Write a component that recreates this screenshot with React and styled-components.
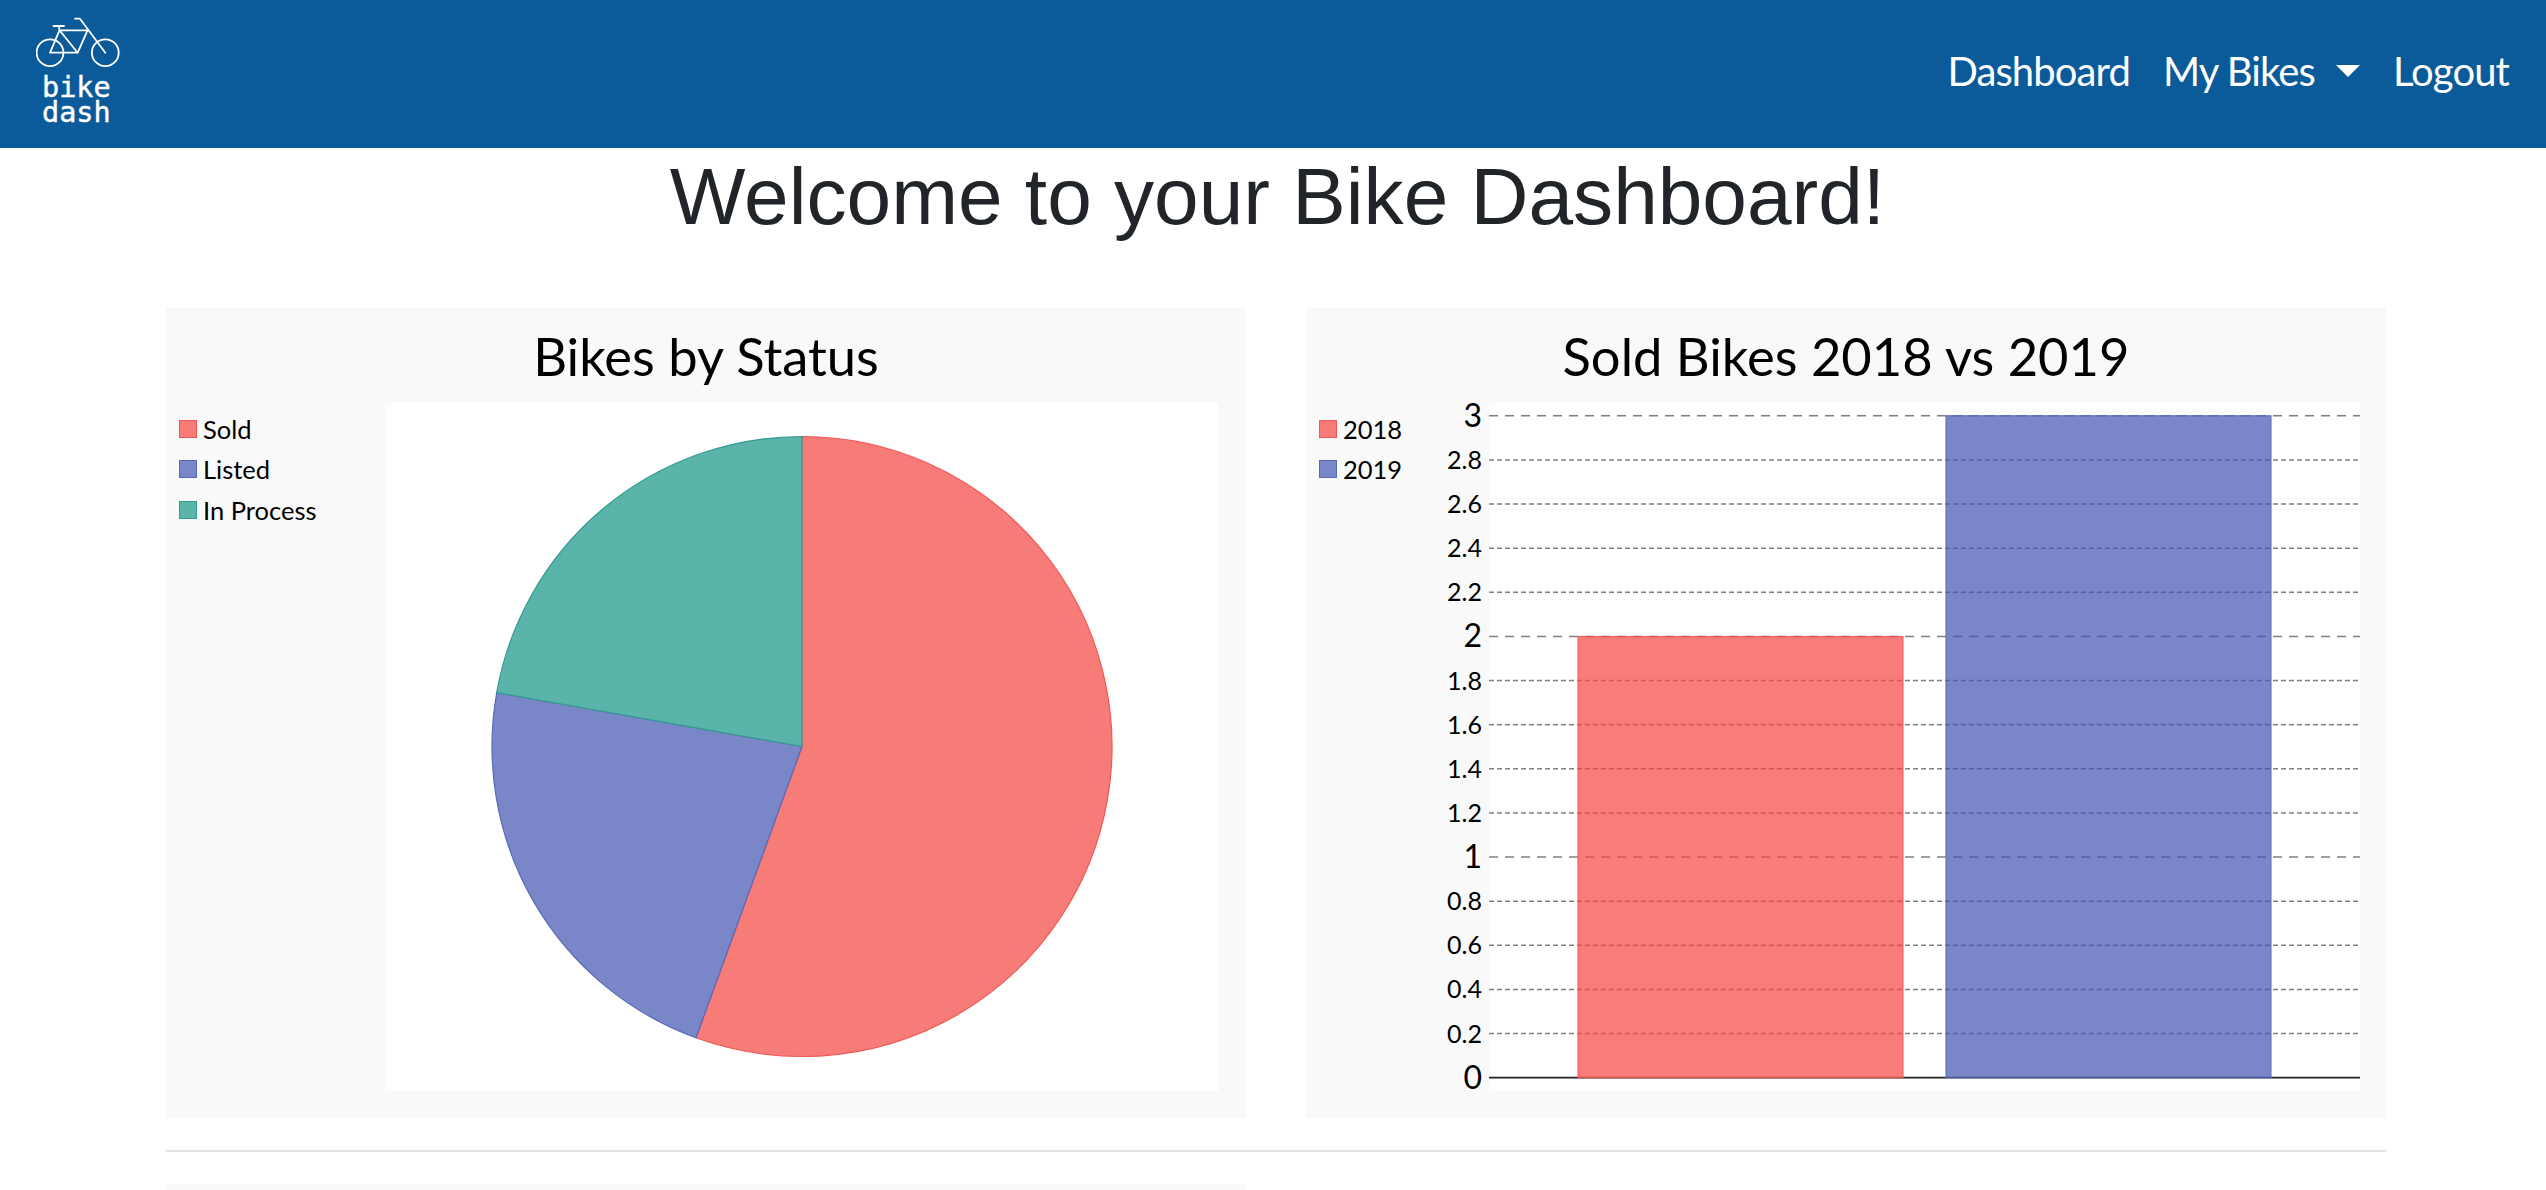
import styled, { createGlobalStyle } from "styled-components"

const GlobalStyle = createGlobalStyle`
  html, body {
    margin: 0;
    padding: 0;
    height: 1190px;
    overflow: hidden;
    background: #fff;
  }
`

const RED = { fill: "rgb(247,123,118)", barFill: "rgba(245,70,66,0.7)", stroke: "rgb(238,88,84)" }
const BLUE = { fill: "rgb(121,134,199)", barFill: "rgba(64,82,175,0.7)", stroke: "rgb(88,104,184)" }
const GREEN = { fill: "rgb(91,180,170)", stroke: "rgb(50,155,143)" }

const statusSlices = [
  { label: "Sold", value: 5, ...RED },
  { label: "Listed", value: 2, ...BLUE },
  { label: "In Process", value: 2, ...GREEN },
]
const yearBars = [
  { label: "2018", value: 2, x: 89, ...RED },
  { label: "2019", value: 3, x: 457, ...BLUE },
]

const ZERO_Y = 674.7
const STEP_Y = 44.13

function Logo() {
  return (
    <LogoBlock>
      <svg width="85" height="50" viewBox="36 17 85 50" fill="none" stroke="#fff" strokeWidth="1.8" strokeLinecap="round" strokeLinejoin="round">
        <circle cx="50" cy="52.7" r="13.4" />
        <circle cx="105.3" cy="52.7" r="13.4" />
        <path d="M53.5 26h10.5M59 26l.5 4.3M59.5 30.3h28M59.5 30.3L50 52.7h27.7L87.5 30.3M59.5 30.3l18.2 22.4M75 18.7h5l25.3 34" />
      </svg>
      <LogoText>bike<br />dash</LogoText>
    </LogoBlock>
  )
}

function Legend({ items, width }) {
  return (
    <LegendList $width={width}>
      {items.map((item) => (
        <LegendRow key={item.label}>
          <Swatch $fill={item.fill} $stroke={item.stroke} />
          {item.label}
        </LegendRow>
      ))}
    </LegendList>
  )
}

function PieChart() {
  const cx = 417
  const cy = 343.5
  const r = 310
  const total = statusSlices.reduce((sum, s) => sum + s.value, 0)
  let angle = 0
  return (
    <ChartSvg>
      {statusSlices.map((s) => {
        const start = angle
        angle += (s.value / total) * Math.PI * 2
        const x0 = cx + r * Math.sin(start)
        const y0 = cy - r * Math.cos(start)
        const x1 = cx + r * Math.sin(angle)
        const y1 = cy - r * Math.cos(angle)
        const large = angle - start > Math.PI ? 1 : 0
        return (
          <path
            key={s.label}
            d={`M${cx} ${cy}L${x0} ${y0}A${r} ${r} 0 ${large} 1 ${x1} ${y1}Z`}
            fill={s.fill}
            stroke={s.stroke}
            strokeWidth="1.2"
          />
        )
      })}
    </ChartSvg>
  )
}

function BarChart() {
  const ticks = Array.from({ length: 16 }, (_, i) => i)
  return (
    <ChartSvg>
      {ticks.slice(1).map((i) => {
        const major = i % 5 === 0
        return (
          <line
            key={i}
            x1="0"
            x2="871"
            y1={ZERO_Y - i * STEP_Y}
            y2={ZERO_Y - i * STEP_Y}
            stroke="#808080"
            strokeWidth="1.5"
            strokeDasharray={major ? "9 7" : "5 3"}
          />
        )
      })}
      <line x1="0" x2="871" y1={ZERO_Y} y2={ZERO_Y} stroke="#222" strokeWidth="1.8" />
      {yearBars.map((b) => (
        <rect
          key={b.label}
          x={b.x}
          y={ZERO_Y - b.value * 5 * STEP_Y}
          width="325"
          height={b.value * 5 * STEP_Y}
          fill={b.barFill}
          stroke={b.stroke}
          strokeWidth="1"
        />
      ))}
      {ticks.map((i) => (
        <AxisLabel key={i} x="-7" y={ZERO_Y - i * STEP_Y} dy={i % 5 === 0 ? 11 : 9} $major={i % 5 === 0}>
          {Number((i * 0.2).toFixed(1))}
        </AxisLabel>
      ))}
    </ChartSvg>
  )
}

export default function App() {
  return (
    <>
      <GlobalStyle />
      <Header>
        <Logo />
        <Nav>
          <NavLink>Dashboard</NavLink>
          <NavDropdown>
            <NavLink>My Bikes</NavLink>
            <Caret />
          </NavDropdown>
          <NavLink>Logout</NavLink>
        </Nav>
      </Header>
      <Main>
        <PageTitle>Welcome to your Bike Dashboard!</PageTitle>
        <CardRow>
          <Card>
            <CardTitle>Bikes by Status</CardTitle>
            <ChartRow $gutter={28}>
              <Legend items={statusSlices} width={219} />
              <Plot>
                <PieChart />
              </Plot>
            </ChartRow>
          </Card>
          <Card>
            <CardTitle>Sold Bikes 2018 vs 2019</CardTitle>
            <ChartRow $gutter={26}>
              <Legend items={yearBars} width={183} />
              <Plot>
                <BarChart />
              </Plot>
            </ChartRow>
          </Card>
        </CardRow>
        <Divider />
        <CardRow>
          <Card />
        </CardRow>
      </Main>
    </>
  )
}

const Header = styled.header`
  height: 148px;
  box-sizing: border-box;
  background: #0b5a9a;
  display: flex;
  align-items: flex-start;
  justify-content: space-between;
  padding: 17px 37px 0 36px;
`
const LogoBlock = styled.div`
  display: flex;
  flex-direction: column;
  svg {
    display: block;
  }
`
const LogoText = styled.div`
  margin: 8px 0 0 6px;
  font-family: "DejaVu Sans Mono", monospace;
  font-size: 28.5px;
  line-height: 25px;
  color: #fff;
  -webkit-text-stroke: 0.4px #fff;
`
const Nav = styled.nav`
  display: flex;
  align-items: center;
  gap: 33px;
  height: 108px;
`
const NavLink = styled.a`
  font-family: Lato, sans-serif;
  font-size: 40px;
  letter-spacing: -0.9px;
  color: #fff;
`
const NavDropdown = styled.div`
  display: flex;
  align-items: center;
  gap: 21px;
`
const Caret = styled.span`
  width: 0;
  height: 0;
  border-left: 12px solid transparent;
  border-right: 12px solid transparent;
  border-top: 12px solid #fff;
`
const Main = styled.main`
  padding: 0 160px 0 166px;
`
const PageTitle = styled.h1`
  margin: 0 0 64px;
  padding-left: 3px;
  font-family: "Liberation Sans", Arial, sans-serif;
  font-size: 80.2px;
  font-weight: 400;
  line-height: 96px;
  color: #212529;
  text-align: center;
`
const CardRow = styled.div`
  display: grid;
  grid-template-columns: 1fr 1fr;
  gap: 60px;
`
const Card = styled.section`
  background: #f9f9f9;
  min-height: 810px;
`
const CardTitle = styled.h2`
  margin: 0;
  height: 95px;
  font-family: Lato, sans-serif;
  font-size: 52.5px;
  font-weight: 400;
  line-height: 96px;
  color: #000;
  text-align: center;
`
const ChartRow = styled.div`
  display: flex;
  height: 688px;
  padding: 0 ${(p) => p.$gutter}px 27px 0;
`
const LegendList = styled.ul`
  list-style: none;
  margin: 0;
  padding: 5.5px 0 0 13px;
  width: ${(p) => p.$width}px;
  box-sizing: border-box;
  flex-shrink: 0;
`
const LegendRow = styled.li`
  display: flex;
  align-items: center;
  gap: 6px;
  height: 40.5px;
  font-family: Lato, sans-serif;
  font-size: 25.5px;
  color: #000;
`
const Swatch = styled.span`
  width: 18px;
  height: 18px;
  box-sizing: border-box;
  background: ${(p) => p.$fill};
  border: 1px solid ${(p) => p.$stroke};
`
const Plot = styled.div`
  flex: 1;
  background: #fff;
`
const ChartSvg = styled.svg`
  display: block;
  width: 100%;
  height: 100%;
  overflow: visible;
`
const AxisLabel = styled.text`
  font-family: Lato, sans-serif;
  font-size: ${(p) => (p.$major ? 32 : 25)}px;
  fill: #000;
  text-anchor: end;
`
const Divider = styled.hr`
  margin: 32px 0 32px;
  border: 0;
  border-top: 2px solid #e3e3e3;
`
